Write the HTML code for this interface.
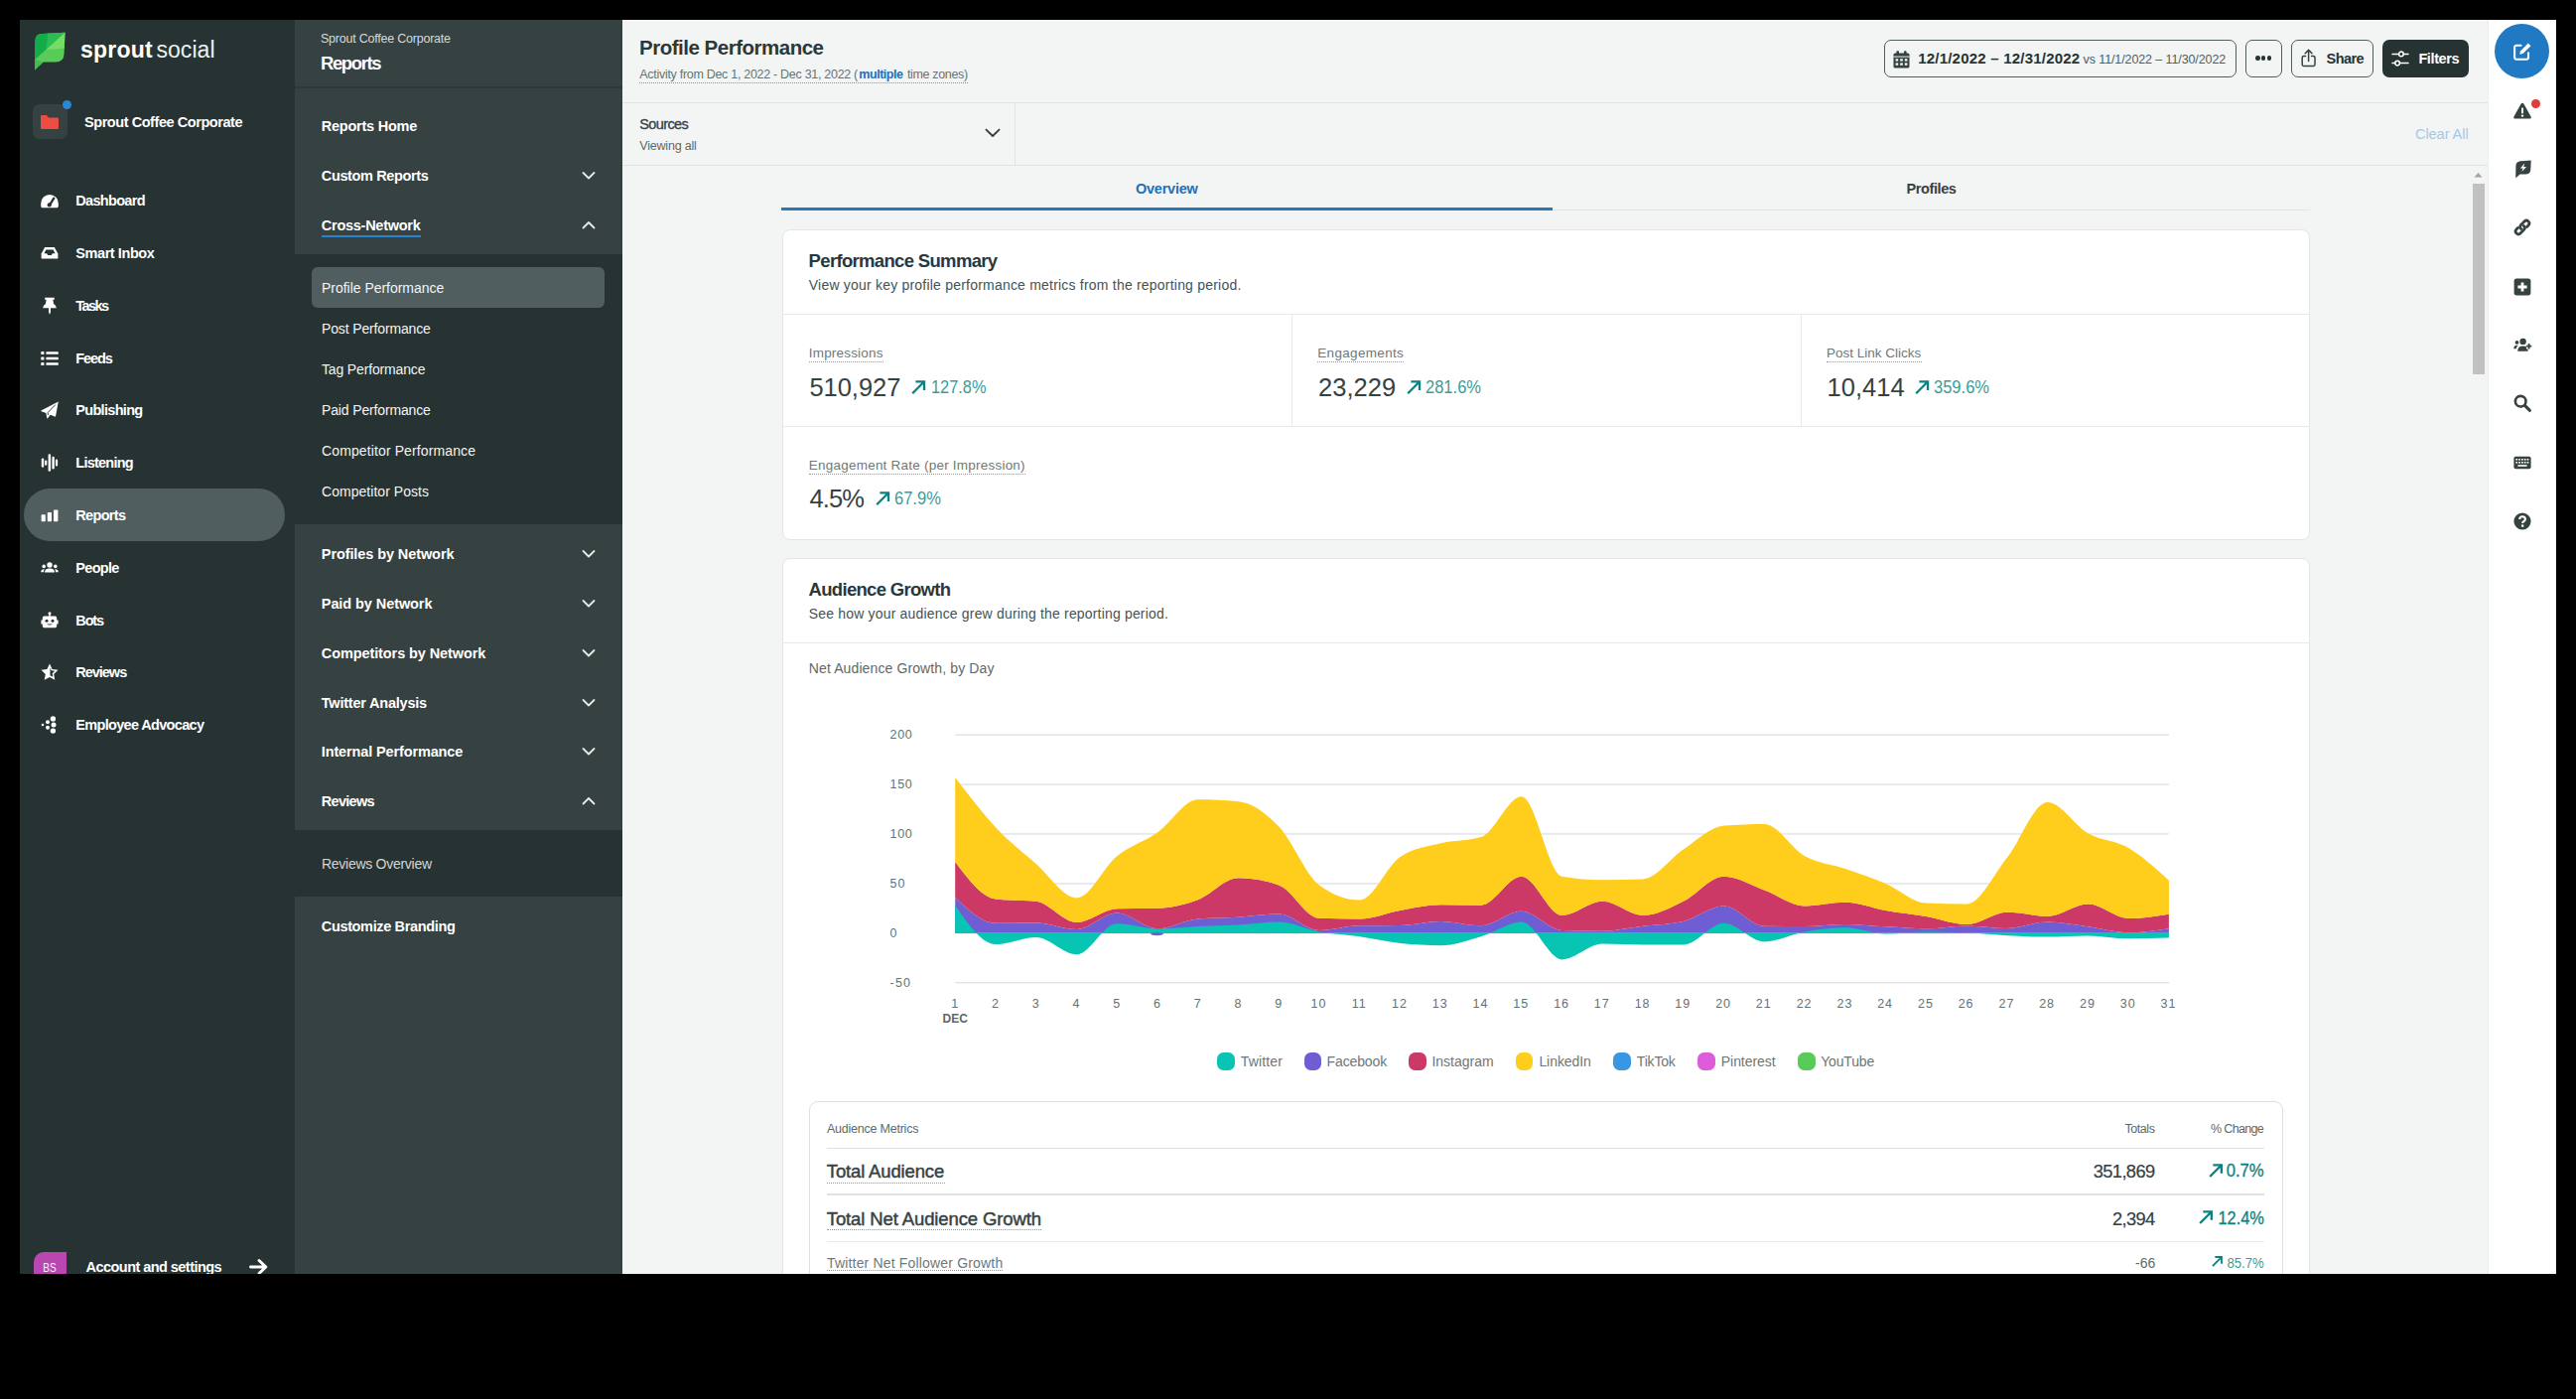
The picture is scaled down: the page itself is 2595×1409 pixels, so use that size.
<!DOCTYPE html>
<html><head><meta charset="utf-8"><title>Profile Performance</title>
<style>
html,body{margin:0;padding:0;background:#000;}
body{width:2595px;height:1409px;overflow:hidden;position:relative;font-family:"Liberation Sans",sans-serif;}
#app{position:absolute;left:20px;top:20px;width:2555px;height:1263px;overflow:hidden;background:#f3f4f4;}
#w{position:absolute;left:-20px;top:-20px;width:2595px;height:1409px;}
.t{position:absolute;white-space:nowrap;}
.r{position:absolute;box-sizing:border-box;}
.u{border-bottom:1px dotted #8b9596;}
</style></head><body><div id="app"><div id="w">
<div class="r" style="left:20px;top:20px;width:277px;height:1263px;background:#273333;"></div>
<svg class="r" style="left:34px;top:32px;" width="32" height="39" viewBox="0 0 32 39">
<path d="M1.5 9 Q1.5 2 8.5 2 L31.5 0.8 L30.6 22 Q30.4 30.6 22 30.6 L9.6 30.6 L1 38.6 Z" fill="#59cb59"/>
<path d="M1.5 9 Q1.5 2 8.5 2 L31.5 0.8 L1.3 28 Z" fill="#12ac4b"/>
<path d="M14 1.7 L31.5 0.8 L12.5 18 Z" fill="#2cbc4f"/>
<path d="M31.5 0.8 L30.8 16.5 L12.5 18 Z" fill="#75dd66"/>
<path d="M1 38.6 L1.3 28 L9.6 30.6 Z" fill="#3fbe4f"/>
</svg>
<div class="t" style="top:36.4px;font-size:23px;line-height:28px;color:#fff;font-weight:700;letter-spacing:0.210px;left:81.0px;">sprout</div>
<div class="t" style="top:36.4px;font-size:23px;line-height:28px;color:#eef0f0;letter-spacing:0.079px;left:157.4px;">social</div>
<div class="r" style="left:33px;top:105px;width:35px;height:35px;background:#364141;border-radius:7px;"></div>
<svg class="r" style="left:40px;top:115px;" width="20" height="16" viewBox="0 0 20 16"><path d="M1 2.2 Q1 1 2.2 1 L7 1 L9 3.4 L17.8 3.4 Q19 3.4 19 4.6 L19 13.8 Q19 15 17.8 15 L2.2 15 Q1 15 1 13.8 Z" fill="#ed4c42"/></svg>
<div class="r" style="left:62.7px;top:100.5px;width:9.6px;height:9.6px;background:#2b87d3;border-radius:50%;"></div>
<div class="t" style="top:112.7px;font-size:14.5px;line-height:20px;color:#fff;font-weight:700;letter-spacing:-0.440px;left:85.0px;">Sprout Coffee Corporate</div>
<div class="r" style="left:24px;top:492px;width:263px;height:53px;background:#515e5f;border-radius:27px;"></div>
<div class="t" style="top:191.8px;font-size:14.5px;line-height:20px;color:#fff;font-weight:700;letter-spacing:-0.692px;left:76.3px;">Dashboard</div>
<div class="t" style="top:244.8px;font-size:14.5px;line-height:20px;color:#fff;font-weight:700;letter-spacing:-0.429px;left:76.3px;">Smart Inbox</div>
<div class="t" style="top:297.6px;font-size:14.5px;line-height:20px;color:#fff;font-weight:700;letter-spacing:-1.560px;left:76.3px;">Tasks</div>
<div class="t" style="top:351.2px;font-size:14.5px;line-height:20px;color:#fff;font-weight:700;letter-spacing:-1.127px;left:76.3px;">Feeds</div>
<div class="t" style="top:403.2px;font-size:14.5px;line-height:20px;color:#fff;font-weight:700;letter-spacing:-0.690px;left:76.3px;">Publishing</div>
<div class="t" style="top:456.2px;font-size:14.5px;line-height:20px;color:#fff;font-weight:700;letter-spacing:-0.768px;left:76.3px;">Listening</div>
<div class="t" style="top:509.0px;font-size:14.5px;line-height:20px;color:#fff;font-weight:700;letter-spacing:-0.681px;left:76.3px;">Reports</div>
<div class="t" style="top:562.0px;font-size:14.5px;line-height:20px;color:#fff;font-weight:700;letter-spacing:-0.689px;left:76.3px;">People</div>
<div class="t" style="top:614.8px;font-size:14.5px;line-height:20px;color:#fff;font-weight:700;letter-spacing:-1.141px;left:76.3px;">Bots</div>
<div class="t" style="top:667.4px;font-size:14.5px;line-height:20px;color:#fff;font-weight:700;letter-spacing:-1.023px;left:76.3px;">Reviews</div>
<div class="t" style="top:720.2px;font-size:14.5px;line-height:20px;color:#fff;font-weight:700;letter-spacing:-0.675px;left:76.3px;">Employee Advocacy</div>
<svg class="r" style="left:41px;top:193.70000000000002px;" width="18" height="18" viewBox="0 0 18 18"><path d="M9 1.9 A8.8 8.8 0 0 0 0.2 10.7 V13.8 Q0.2 15.2 1.6 15.2 H16.4 Q17.8 15.2 17.8 13.8 V10.7 A8.8 8.8 0 0 0 9 1.9 Z" fill="#fff"/><path d="M13.3 5.6 L9.4 11.8" stroke="#273333" stroke-width="2.3" stroke-linecap="round"/><circle cx="8.7" cy="12.4" r="2.1" fill="#273333"/></svg>
<svg class="r" style="left:41px;top:245.8px;" width="18" height="18" viewBox="0 0 18 18"><path d="M4.2 3 H13.8 L17.4 9.6 V13.4 Q17.4 14.6 16.2 14.6 H1.8 Q0.6 14.6 0.6 13.4 V9.6 Z" fill="#fff"/><path d="M5.4 5.4 H12.6 L14.6 9.3 H11.8 L10.9 11.1 H7.1 L6.2 9.3 H3.4 Z" fill="#273333"/></svg>
<svg class="r" style="left:41px;top:298.6px;" width="18" height="18" viewBox="0 0 18 18"><path d="M4.2 0.8 H13.8 V2.8 H12.4 L13 7 Q15.6 8.5 15.8 11.2 H10 V15.2 L9 17.8 L8 15.2 V11.2 H2.2 Q2.4 8.5 5 7 L5.6 2.8 H4.2 Z" fill="#fff"/></svg>
<svg class="r" style="left:41px;top:352.2px;" width="18" height="18" viewBox="0 0 18 18"><rect x="0.3" y="2" width="3.1" height="3.1" rx="0.7" fill="#fff"/><rect x="0.3" y="7.5" width="3.1" height="3.1" rx="0.7" fill="#fff"/><rect x="0.3" y="13" width="3.1" height="3.1" rx="0.7" fill="#fff"/><rect x="5.4" y="2.3" width="12.4" height="2.5" rx="0.6" fill="#fff"/><rect x="5.4" y="7.8" width="12.4" height="2.5" rx="0.6" fill="#fff"/><rect x="5.4" y="13.3" width="12.4" height="2.5" rx="0.6" fill="#fff"/></svg>
<svg class="r" style="left:41px;top:404.2px;" width="18" height="18" viewBox="0 0 18 18"><path d="M17.8 0.4 L0.4 9.4 Q-0.2 9.9 0.6 10.3 L5.4 12 L6.2 17 Q6.5 17.8 7.1 17.2 L9.6 13.7 L14.2 15.6 Q14.9 15.8 15.1 15.1 Z" fill="#fff"/><path d="M14.8 3.6 L7.2 11.5 L7.4 14" stroke="#273333" stroke-width="0.9" fill="none"/></svg>
<svg class="r" style="left:41px;top:457.2px;" width="18" height="18" viewBox="0 0 18 18"><rect x="0.8" y="4.4" width="2.4" height="9.4" rx="1.2" fill="#fff"/><rect x="4.1" y="6.4" width="2.2" height="5.4" rx="1.1" fill="#fff"/><rect x="7.6" y="0.2" width="2.5" height="17.6" rx="1.2" fill="#fff"/><rect x="11.4" y="2.8" width="2.4" height="12.6" rx="1.2" fill="#fff"/><rect x="14.9" y="5.6" width="2.2" height="7" rx="1.1" fill="#fff"/></svg>
<svg class="r" style="left:41px;top:510.0px;" width="18" height="18" viewBox="0 0 18 18"><rect x="0.6" y="8.2" width="4.2" height="7" rx="0.9" fill="#fff"/><rect x="6.8" y="5.9" width="4.2" height="9.3" rx="0.9" fill="#fff"/><rect x="13" y="3.4" width="4.4" height="11.8" rx="0.9" fill="#fff"/></svg>
<svg class="r" style="left:41px;top:563.0px;" width="18" height="18" viewBox="0 0 18 18"><circle cx="9" cy="6" r="2.7" fill="#fff"/><path d="M4 13.6 Q4 9.6 9 9.6 Q14 9.6 14 13.6 Z" fill="#fff"/><circle cx="3.2" cy="7.4" r="1.8" fill="#fff"/><circle cx="14.8" cy="7.4" r="1.8" fill="#fff"/><path d="M0.2 13.2 Q0.2 10.2 3.4 10.2 L3.8 10.3 Q3 11.4 3 13.2 Z" fill="#fff"/><path d="M17.8 13.2 Q17.8 10.2 14.6 10.2 L14.2 10.3 Q15 11.4 15 13.2 Z" fill="#fff"/></svg>
<svg class="r" style="left:41px;top:615.8px;" width="18" height="18" viewBox="0 0 18 18"><circle cx="9" cy="1.8" r="1.5" fill="#fff"/><rect x="8.3" y="2" width="1.4" height="3" fill="#fff"/><path d="M3.6 4.6 H14.4 Q16.2 4.6 16.2 6.4 V8.6 H17.6 V12.4 H16.2 V14.4 Q16.2 16.2 14.4 16.2 H3.6 Q1.8 16.2 1.8 14.4 V12.4 H0.4 V8.6 H1.8 V6.4 Q1.8 4.6 3.6 4.6 Z" fill="#fff"/><circle cx="6" cy="9.2" r="1.5" fill="#273333"/><circle cx="12" cy="9.2" r="1.5" fill="#273333"/><path d="M6 12.4 Q9 14.6 12 12.4 Z" fill="#273333"/></svg>
<svg class="r" style="left:41px;top:668.4px;" width="18" height="18" viewBox="0 0 18 18"><path d="M9 0.6 L11.6 6 L17.5 6.8 L13.2 10.9 L14.3 16.8 L9 14 L3.7 16.8 L4.8 10.9 L0.5 6.8 L6.4 6 Z" fill="#fff"/><path d="M9.5 4.2 L10.7 7.3 L14.3 7.8 L11.7 10.2 L12.3 13.8 L9.5 12.2 Z" fill="#273333"/></svg>
<svg class="r" style="left:41px;top:721.2px;" width="18" height="18" viewBox="0 0 18 18"><circle cx="12.4" cy="2.9" r="2.7" fill="#fff"/><circle cx="13" cy="9" r="2.5" fill="#fff"/><circle cx="12.4" cy="15.1" r="2.7" fill="#fff"/><circle cx="7" cy="6.2" r="2" fill="#fff"/><circle cx="7" cy="11.8" r="2" fill="#fff"/><circle cx="2" cy="9" r="1.3" fill="#fff"/></svg>
<div class="r" style="left:34.2px;top:1261px;width:33px;height:34px;background:#b946b1;border-radius:10px 0 0 0;"></div>
<div class="t" style="top:1266.6px;font-size:12px;line-height:20px;color:#fbeffa;left:-449.6px;width:1000px;text-align:center;transform:scaleX(0.8370);transform-origin:center center;">BS</div>
<div class="t" style="top:1266.0px;font-size:14.5px;line-height:20px;color:#fff;font-weight:700;letter-spacing:-0.549px;left:86.6px;">Account and settings</div>
<svg class="r" style="left:251px;top:1267px;" width="20" height="18" viewBox="0 0 20 18"><path d="M1.5 9 H16.5 M10 2.5 L16.8 9 L10 15.5" stroke="#fff" stroke-width="2.9" fill="none" stroke-linecap="round" stroke-linejoin="round"/></svg>
<div class="r" style="left:297px;top:20px;width:330px;height:1263px;background:#364141;"></div>
<div class="r" style="left:297px;top:87px;width:330px;height:2px;background:#2d3939;"></div>
<div class="t" style="top:28.5px;font-size:12.5px;line-height:20px;color:#d5dadb;letter-spacing:-0.226px;left:323.0px;">Sprout Coffee Corporate</div>
<div class="t" style="top:53.6px;font-size:18.5px;line-height:20px;color:#fff;font-weight:700;letter-spacing:-1.400px;left:323.0px;">Reports</div>
<div class="t" style="top:117.2px;font-size:14.5px;line-height:20px;color:#fff;font-weight:700;letter-spacing:-0.237px;left:323.8px;">Reports Home</div>
<div class="t" style="top:167.2px;font-size:14.5px;line-height:20px;color:#fff;font-weight:700;letter-spacing:-0.368px;left:323.8px;">Custom Reports</div>
<svg class="r" style="left:586px;top:172.2px;" width="14" height="10" viewBox="0 0 14 10"><path d="M1.5 2 L7 7.5 L12.5 2" stroke="#e8eaea" stroke-width="1.8" fill="none" stroke-linecap="round" stroke-linejoin="round"/></svg>
<div class="t" style="top:217.2px;font-size:14.5px;line-height:20px;color:#fff;font-weight:700;letter-spacing:-0.262px;left:323.8px;">Cross-Network</div>
<svg class="r" style="left:586px;top:222.2px;" width="14" height="10" viewBox="0 0 14 10"><path d="M1.5 7.5 L7 2 L12.5 7.5" stroke="#e8eaea" stroke-width="1.8" fill="none" stroke-linecap="round" stroke-linejoin="round"/></svg>
<div class="t" style="top:548.4px;font-size:14.5px;line-height:20px;color:#fff;font-weight:700;letter-spacing:-0.093px;left:323.8px;">Profiles by Network</div>
<svg class="r" style="left:586px;top:553.4px;" width="14" height="10" viewBox="0 0 14 10"><path d="M1.5 2 L7 7.5 L12.5 2" stroke="#e8eaea" stroke-width="1.8" fill="none" stroke-linecap="round" stroke-linejoin="round"/></svg>
<div class="t" style="top:598.1px;font-size:14.5px;line-height:20px;color:#fff;font-weight:700;letter-spacing:-0.079px;left:323.8px;">Paid by Network</div>
<svg class="r" style="left:586px;top:603.1px;" width="14" height="10" viewBox="0 0 14 10"><path d="M1.5 2 L7 7.5 L12.5 2" stroke="#e8eaea" stroke-width="1.8" fill="none" stroke-linecap="round" stroke-linejoin="round"/></svg>
<div class="t" style="top:647.8px;font-size:14.5px;line-height:20px;color:#fff;font-weight:700;letter-spacing:-0.099px;left:323.8px;">Competitors by Network</div>
<svg class="r" style="left:586px;top:652.8px;" width="14" height="10" viewBox="0 0 14 10"><path d="M1.5 2 L7 7.5 L12.5 2" stroke="#e8eaea" stroke-width="1.8" fill="none" stroke-linecap="round" stroke-linejoin="round"/></svg>
<div class="t" style="top:697.5px;font-size:14.5px;line-height:20px;color:#fff;font-weight:700;letter-spacing:-0.219px;left:323.8px;">Twitter Analysis</div>
<svg class="r" style="left:586px;top:702.5px;" width="14" height="10" viewBox="0 0 14 10"><path d="M1.5 2 L7 7.5 L12.5 2" stroke="#e8eaea" stroke-width="1.8" fill="none" stroke-linecap="round" stroke-linejoin="round"/></svg>
<div class="t" style="top:747.2px;font-size:14.5px;line-height:20px;color:#fff;font-weight:700;letter-spacing:-0.134px;left:323.8px;">Internal Performance</div>
<svg class="r" style="left:586px;top:752.2px;" width="14" height="10" viewBox="0 0 14 10"><path d="M1.5 2 L7 7.5 L12.5 2" stroke="#e8eaea" stroke-width="1.8" fill="none" stroke-linecap="round" stroke-linejoin="round"/></svg>
<div class="t" style="top:796.9px;font-size:14.5px;line-height:20px;color:#fff;font-weight:700;letter-spacing:-0.706px;left:323.8px;">Reviews</div>
<svg class="r" style="left:586px;top:801.9px;" width="14" height="10" viewBox="0 0 14 10"><path d="M1.5 7.5 L7 2 L12.5 7.5" stroke="#e8eaea" stroke-width="1.8" fill="none" stroke-linecap="round" stroke-linejoin="round"/></svg>
<div class="t" style="top:923.3px;font-size:14.5px;line-height:20px;color:#fff;font-weight:700;letter-spacing:-0.352px;left:323.8px;">Customize Branding</div>
<div class="r" style="left:324px;top:237px;width:100px;height:2px;background:#2b83cc;"></div>
<div class="r" style="left:297px;top:256px;width:330px;height:272px;background:#273333;"></div>
<div class="r" style="left:314px;top:269px;width:295px;height:41px;background:#515e5f;border-radius:6px;"></div>
<div class="t" style="top:280.4px;font-size:14px;line-height:20px;color:#f3f4f4;letter-spacing:-0.023px;left:324.0px;">Profile Performance</div>
<div class="t" style="top:321.4px;font-size:14px;line-height:20px;color:#f3f4f4;letter-spacing:-0.143px;left:324.0px;">Post Performance</div>
<div class="t" style="top:362.4px;font-size:14px;line-height:20px;color:#f3f4f4;letter-spacing:-0.151px;left:324.0px;">Tag Performance</div>
<div class="t" style="top:403.4px;font-size:14px;line-height:20px;color:#f3f4f4;letter-spacing:-0.144px;left:324.0px;">Paid Performance</div>
<div class="t" style="top:444.4px;font-size:14px;line-height:20px;color:#f3f4f4;letter-spacing:0.119px;left:324.0px;">Competitor Performance</div>
<div class="t" style="top:485.4px;font-size:14px;line-height:20px;color:#f3f4f4;letter-spacing:0.042px;left:324.0px;">Competitor Posts</div>
<div class="r" style="left:297px;top:836px;width:330px;height:67px;background:#273333;"></div>
<div class="t" style="top:860.2px;font-size:14px;line-height:20px;color:#d0d5d6;letter-spacing:-0.276px;left:324.0px;">Reviews Overview</div>
<div class="r" style="left:627px;top:103px;width:1879px;height:1px;background:#e1e4e4;"></div>
<div class="t" style="top:38.2px;font-size:20.5px;line-height:20px;color:#2c3838;font-weight:700;letter-spacing:-0.490px;left:644.0px;">Profile Performance</div>
<div class="t" style="top:64.5px;font-size:12.5px;line-height:20px;color:#687374;letter-spacing:-0.294px;left:644.3px;">Activity from Dec 1, 2022 - Dec 31, 2022 (</div>
<div class="t" style="top:64.5px;font-size:12.5px;line-height:20px;color:#2470b7;font-weight:700;letter-spacing:-0.460px;left:865.3px;">multiple</div>
<div class="t" style="top:64.5px;font-size:12.5px;line-height:20px;color:#687374;letter-spacing:-0.331px;left:913.9px;">time zones)</div>
<div class="r" style="left:644px;top:82.6px;width:331px;height:1px;border-bottom:1px dotted #8b9596;"></div>
<div class="r" style="left:1898px;top:40px;width:355px;height:38px;border:1px solid #515e5f;border-radius:7px;"></div>
<svg class="r" style="left:1907px;top:50.5px;" width="17" height="18" viewBox="0 0 17 18">
<rect x="0.5" y="2.6" width="16" height="15" rx="1.6" fill="#364141"/>
<rect x="3.4" y="0.3" width="2.6" height="4.4" rx="0.8" fill="#364141"/><rect x="11" y="0.3" width="2.6" height="4.4" rx="0.8" fill="#364141"/>
<rect x="0.5" y="5.6" width="16" height="1" fill="#f3f4f4"/>
<g fill="#f3f4f4"><rect x="2.6" y="8.2" width="2.6" height="2.4"/><rect x="7.2" y="8.2" width="2.6" height="2.4"/><rect x="11.8" y="8.2" width="2.6" height="2.4"/>
<rect x="2.6" y="12.4" width="2.6" height="2.4"/><rect x="7.2" y="12.4" width="2.6" height="2.4"/><rect x="11.8" y="12.4" width="2.6" height="2.4"/></g></svg>
<div class="t" style="top:48.8px;font-size:15px;line-height:20px;color:#273333;font-weight:700;letter-spacing:0.215px;left:1932.2px;">12/1/2022 – 12/31/2022</div>
<div class="t" style="top:49.6px;font-size:12.5px;line-height:20px;color:#515e5f;letter-spacing:-0.108px;left:2098.6px;">vs 11/1/2022 – 11/30/2022</div>
<div class="r" style="left:2262px;top:40px;width:37px;height:38px;border:1px solid #515e5f;border-radius:7px;"></div>
<div class="r" style="left:2272.3px;top:56.4px;width:4.6px;height:4.6px;background:#273333;border-radius:50%;"></div>
<div class="r" style="left:2277.9px;top:56.4px;width:4.6px;height:4.6px;background:#273333;border-radius:50%;"></div>
<div class="r" style="left:2283.5px;top:56.4px;width:4.6px;height:4.6px;background:#273333;border-radius:50%;"></div>
<div class="r" style="left:2308px;top:40px;width:83px;height:38px;border:1px solid #515e5f;border-radius:7px;"></div>
<svg class="r" style="left:2318px;top:49px;" width="16" height="19" viewBox="0 0 16 19"><path d="M4.6 7.6 H2.6 Q1.2 7.6 1.2 9 V16 Q1.2 17.4 2.6 17.4 H12.6 Q14 17.4 14 16 V9 Q14 7.6 12.6 7.6 H10.6" stroke="#364141" stroke-width="1.5" fill="none" stroke-linecap="round"/><path d="M7.6 12.4 V1.6 M4.2 4.8 L7.6 1.4 L11 4.8" stroke="#364141" stroke-width="1.5" fill="none" stroke-linecap="round" stroke-linejoin="round"/></svg>
<div class="t" style="top:48.8px;font-size:14.5px;line-height:20px;color:#273333;font-weight:700;letter-spacing:-0.575px;left:2343.6px;">Share</div>
<div class="r" style="left:2400px;top:40px;width:87px;height:38px;background:#273333;border-radius:7px;"></div>
<svg class="r" style="left:2409px;top:49px;" width="18" height="20" viewBox="0 0 18 20"><path d="M1 5.4 H7.4 M12.4 5.4 H17 M1 14.6 H3.6 M8.6 14.6 H17" stroke="#fff" stroke-width="1.5" stroke-linecap="round"/><circle cx="9.9" cy="5.4" r="2.3" stroke="#fff" stroke-width="1.5" fill="none"/><circle cx="6.1" cy="14.6" r="2.3" stroke="#fff" stroke-width="1.5" fill="none"/></svg>
<div class="t" style="top:48.8px;font-size:14.5px;line-height:20px;color:#fff;font-weight:700;letter-spacing:-0.386px;left:2436.4px;">Filters</div>
<div class="r" style="left:627px;top:166px;width:1879px;height:1px;background:#e1e4e4;"></div>
<div class="r" style="left:1022px;top:104px;width:1px;height:62px;background:#e1e4e4;"></div>
<div class="t" style="top:115.0px;font-size:14.5px;line-height:20px;color:#364141;letter-spacing:-0.616px;left:644.3px;-webkit-text-stroke:0.3px #364141;">Sources</div>
<div class="t" style="top:137.0px;font-size:12.5px;line-height:20px;color:#5e696a;letter-spacing:-0.203px;left:644.3px;">Viewing all</div>
<svg class="r" style="left:991.5px;top:128.5px;" width="16" height="10" viewBox="0 0 16 10"><path d="M1.5 1.6 L8 8 L14.5 1.6" stroke="#364141" stroke-width="1.9" fill="none" stroke-linecap="round" stroke-linejoin="round"/></svg>
<div class="t" style="top:125.4px;font-size:14.5px;line-height:20px;color:#a3c9e6;letter-spacing:-0.049px;left:2433.0px;">Clear All</div>
<div class="r" style="left:787px;top:211px;width:1540px;height:1px;background:#e1e4e4;"></div>
<div class="r" style="left:787px;top:208.8px;width:777px;height:3.3px;background:#2c76b9;"></div>
<div class="t" style="top:180.0px;font-size:14.5px;line-height:20px;color:#2470b7;font-weight:700;letter-spacing:-0.212px;left:675.3px;width:1000px;text-align:center;">Overview</div>
<div class="t" style="top:180.0px;font-size:14.5px;line-height:20px;color:#364141;font-weight:700;letter-spacing:-0.384px;left:1445.5px;width:1000px;text-align:center;">Profiles</div>
<div class="r" style="left:2490.5px;top:184.5px;width:12.5px;height:192.5px;background:#c1c1c1;"></div>
<svg class="r" style="left:2492px;top:173px;" width="9" height="6" viewBox="0 0 9 6"><path d="M0.5 5.5 L4.5 1 L8.5 5.5 Z" fill="#a3a3a3"/></svg>
<div class="r" style="left:787.5px;top:230.5px;width:1539px;height:313px;background:#fff;border:1px solid #e3e6e6;border-radius:8px;"></div>
<div class="t" style="top:252.6px;font-size:18.5px;line-height:20px;color:#2c3838;font-weight:700;letter-spacing:-0.670px;left:814.6px;">Performance Summary</div>
<div class="t" style="top:277.3px;font-size:14px;line-height:20px;color:#465253;letter-spacing:0.209px;left:814.8px;">View your key profile performance metrics from the reporting period.</div>
<div class="r" style="left:788px;top:316px;width:1538px;height:1px;background:#e8eaea;"></div>
<div class="r" style="left:788px;top:429px;width:1538px;height:1px;background:#e8eaea;"></div>
<div class="r" style="left:1301px;top:316px;width:1px;height:113px;background:#e8eaea;"></div>
<div class="r" style="left:1814px;top:316px;width:1px;height:113px;background:#e8eaea;"></div>
<div class="t" style="top:346.1px;font-size:13.5px;line-height:20px;color:#6e797a;letter-spacing:0.182px;left:814.8px;">Impressions</div>
<div class="r" style="left:814.8px;top:364.1px;width:75.1px;height:1px;border-bottom:1px dotted #929a9b;"></div>
<div class="t" style="top:374.9px;font-size:25.5px;line-height:30px;color:#364141;letter-spacing:-0.030px;left:815.4px;">510,927</div>
<svg class="r" style="left:918.4px;top:382.7px;" width="14.4" height="14.4" viewBox="0 0 14.4 14.4"><path d="M1.2 13.2 L12.4 2 M4.4 1.35 H13.05 V10" stroke="#0c8280" stroke-width="2.3" fill="none" stroke-linecap="butt" stroke-linejoin="miter"/></svg>
<div class="t" style="top:377.7px;font-size:17.5px;line-height:24px;color:#3a9d9a;left:938.0px;transform:scaleX(0.9334);transform-origin:left center;">127.8%</div>
<div class="t" style="top:346.1px;font-size:13.5px;line-height:20px;color:#6e797a;letter-spacing:0.319px;left:1327.3px;">Engagements</div>
<div class="r" style="left:1327.3px;top:364.1px;width:87.0px;height:1px;border-bottom:1px dotted #929a9b;"></div>
<div class="t" style="top:374.9px;font-size:25.5px;line-height:30px;color:#364141;letter-spacing:0.081px;left:1327.9px;">23,229</div>
<svg class="r" style="left:1417.4px;top:382.7px;" width="14.4" height="14.4" viewBox="0 0 14.4 14.4"><path d="M1.2 13.2 L12.4 2 M4.4 1.35 H13.05 V10" stroke="#0c8280" stroke-width="2.3" fill="none" stroke-linecap="butt" stroke-linejoin="miter"/></svg>
<div class="t" style="top:377.7px;font-size:17.5px;line-height:24px;color:#3a9d9a;left:1435.6px;transform:scaleX(0.9435);transform-origin:left center;">281.6%</div>
<div class="t" style="top:346.1px;font-size:13.5px;line-height:20px;color:#6e797a;letter-spacing:-0.005px;left:1840.0px;">Post Link Clicks</div>
<div class="r" style="left:1840px;top:364.1px;width:95.7px;height:1px;border-bottom:1px dotted #929a9b;"></div>
<div class="t" style="top:374.9px;font-size:25.5px;line-height:30px;color:#364141;left:1840.6px;">10,414</div>
<svg class="r" style="left:1929.4px;top:382.7px;" width="14.4" height="14.4" viewBox="0 0 14.4 14.4"><path d="M1.2 13.2 L12.4 2 M4.4 1.35 H13.05 V10" stroke="#0c8280" stroke-width="2.3" fill="none" stroke-linecap="butt" stroke-linejoin="miter"/></svg>
<div class="t" style="top:377.7px;font-size:17.5px;line-height:24px;color:#3a9d9a;left:1948.2px;transform:scaleX(0.9435);transform-origin:left center;">359.6%</div>
<div class="t" style="top:458.8px;font-size:13.5px;line-height:20px;color:#6e797a;letter-spacing:0.224px;left:814.8px;">Engagement Rate (per Impression)</div>
<div class="r" style="left:814.8px;top:476.8px;width:218.3px;height:1px;border-bottom:1px dotted #929a9b;"></div>
<div class="t" style="top:486.9px;font-size:25.5px;line-height:30px;color:#364141;letter-spacing:-0.841px;left:815.4px;">4.5%</div>
<svg class="r" style="left:882.2px;top:494.7px;" width="14.4" height="14.4" viewBox="0 0 14.4 14.4"><path d="M1.2 13.2 L12.4 2 M4.4 1.35 H13.05 V10" stroke="#0c8280" stroke-width="2.3" fill="none" stroke-linecap="butt" stroke-linejoin="miter"/></svg>
<div class="t" style="top:489.7px;font-size:17.5px;line-height:24px;color:#3a9d9a;left:901.2px;transform:scaleX(0.9432);transform-origin:left center;">67.9%</div>
<div class="r" style="left:787.5px;top:561.5px;width:1539px;height:760px;background:#fff;border:1px solid #e3e6e6;border-radius:8px;"></div>
<div class="t" style="top:584.2px;font-size:18.5px;line-height:20px;color:#2c3838;font-weight:700;letter-spacing:-0.697px;left:814.6px;">Audience Growth</div>
<div class="t" style="top:608.2px;font-size:14px;line-height:20px;color:#465253;letter-spacing:0.175px;left:814.8px;">See how your audience grew during the reporting period.</div>
<div class="r" style="left:788px;top:647px;width:1538px;height:1px;background:#e8eaea;"></div>
<div class="t" style="top:663.0px;font-size:14px;line-height:20px;color:#5e696a;letter-spacing:0.113px;left:814.8px;">Net Audience Growth, by Day</div>
<svg class="r" style="left:0;top:0" width="2595" height="1409" viewBox="0 0 2595 1409"><rect x="962.2" y="739.5" width="1222.7" height="1.3" fill="#dde0e3"/><rect x="962.2" y="789.4" width="1222.7" height="1.3" fill="#dde0e3"/><rect x="962.2" y="839.3" width="1222.7" height="1.3" fill="#dde0e3"/><rect x="962.2" y="889.3" width="1222.7" height="1.3" fill="#dde0e3"/><rect x="962.2" y="939.2" width="1222.7" height="1.3" fill="#dde0e3"/><rect x="962.2" y="989.1" width="1222.7" height="1.3" fill="#dde0e3"/><path d="M962.2,903.9C975.8,916.8 989.4,929.8 1003.0,929.8C1016.5,929.8 1030.1,929.5 1043.7,929.5C1057.3,929.5 1070.9,936.1 1084.5,936.1C1098.1,936.1 1111.6,919.6 1125.2,919.6C1138.8,919.6 1152.4,935.3 1166.0,935.3C1179.6,935.3 1193.2,926.5 1206.7,925.4C1220.3,924.4 1233.9,924.7 1247.5,923.8C1261.1,923.0 1274.7,920.4 1288.3,920.4C1301.8,920.4 1315.4,936.9 1329.0,936.9C1342.6,936.9 1356.2,932.4 1369.8,932.2C1383.4,932.0 1396.9,932.1 1410.5,931.9C1424.1,931.7 1437.7,927.9 1451.3,927.9C1464.9,927.9 1478.5,932.2 1492.0,932.2C1505.6,932.2 1519.2,917.7 1532.8,917.7C1546.4,917.7 1560.0,936.4 1573.6,936.9C1587.1,937.4 1600.7,937.7 1614.3,937.7C1627.9,937.7 1641.5,934.3 1655.1,932.7C1668.7,931.1 1682.2,931.1 1695.8,927.9C1709.4,924.7 1723.0,912.5 1736.6,912.5C1750.2,912.5 1763.8,932.5 1777.3,932.7C1790.9,932.9 1804.5,933.0 1818.1,933.0C1831.7,933.0 1845.3,930.9 1858.9,930.9C1872.4,930.9 1886.0,932.6 1899.6,933.3C1913.2,934.0 1926.8,935.3 1940.4,935.3C1954.0,935.3 1967.5,932.4 1981.1,932.4C1994.7,932.4 2008.3,935.0 2021.9,935.0C2035.5,935.0 2049.1,928.5 2062.6,928.5C2076.2,928.5 2089.8,931.5 2103.4,933.3C2117.0,935.1 2130.6,939.3 2144.2,939.3C2157.7,939.3 2171.3,937.3 2184.9,935.3L2184.9,939.8C2171.3,939.8 2157.7,939.8 2144.2,939.8C2130.6,939.8 2117.0,939.8 2103.4,939.8C2089.8,939.8 2076.2,939.8 2062.6,939.8C2049.1,939.8 2035.5,939.8 2021.9,939.8C2008.3,939.8 1994.7,939.8 1981.1,939.8C1967.5,939.8 1954.0,939.8 1940.4,939.8C1926.8,939.8 1913.2,939.8 1899.6,939.8C1886.0,939.8 1872.4,939.8 1858.9,939.8C1845.3,939.8 1831.7,939.8 1818.1,939.8C1804.5,939.8 1790.9,939.8 1777.3,939.8C1763.8,939.8 1750.2,939.8 1736.6,939.8C1723.0,939.8 1709.4,939.8 1695.8,939.8C1682.2,939.8 1668.7,939.8 1655.1,939.8C1641.5,939.8 1627.9,939.8 1614.3,939.8C1600.7,939.8 1587.1,939.8 1573.6,939.8C1560.0,939.8 1546.4,939.8 1532.8,939.8C1519.2,939.8 1505.6,939.8 1492.0,939.8C1478.5,939.8 1464.9,939.8 1451.3,939.8C1437.7,939.8 1424.1,939.8 1410.5,939.8C1396.9,939.8 1383.4,939.8 1369.8,939.8C1356.2,939.8 1342.6,939.8 1329.0,939.8C1315.4,939.8 1301.8,939.8 1288.3,939.8C1274.7,939.8 1261.1,939.8 1247.5,939.8C1233.9,939.8 1220.3,939.8 1206.7,939.8C1193.2,939.8 1179.6,939.8 1166.0,939.8C1152.4,939.8 1138.8,939.8 1125.2,939.8C1111.6,939.8 1098.1,939.8 1084.5,939.8C1070.9,939.8 1057.3,939.8 1043.7,939.8C1030.1,939.8 1016.5,939.8 1003.0,939.8C989.4,939.8 975.8,939.8 962.2,939.8Z" fill="#6f5ed3"/><path d="M962.2,911.8C975.8,931.5 989.4,951.1 1003.0,951.1C1016.5,951.1 1030.1,944.0 1043.7,944.0C1057.3,944.0 1070.9,961.3 1084.5,961.3C1098.1,961.3 1111.6,930.3 1125.2,930.3C1138.8,930.3 1152.4,935.3 1166.0,935.3C1179.6,935.3 1193.2,933.7 1206.7,933.0C1220.3,932.4 1233.9,932.1 1247.5,931.4C1261.1,930.7 1274.7,928.6 1288.3,928.6C1301.8,928.6 1315.4,936.1 1329.0,938.5C1342.6,940.9 1356.2,941.3 1369.8,943.2C1383.4,945.1 1396.9,948.5 1410.5,950.0C1424.1,951.4 1437.7,952.2 1451.3,952.2C1464.9,952.2 1478.5,947.1 1492.0,943.2C1505.6,939.3 1519.2,928.6 1532.8,928.6C1546.4,928.6 1560.0,966.4 1573.6,966.4C1587.1,966.4 1600.7,950.6 1614.3,950.6C1627.9,950.6 1641.5,951.6 1655.1,951.6C1668.7,951.6 1682.2,951.6 1695.8,951.6C1709.4,951.6 1723.0,929.8 1736.6,929.8C1750.2,929.8 1763.8,948.4 1777.3,948.4C1790.9,948.4 1804.5,940.8 1818.1,938.5C1831.7,936.2 1845.3,934.3 1858.9,934.3C1872.4,934.3 1886.0,940.5 1899.6,940.5C1913.2,940.5 1926.8,938.4 1940.4,938.4C1954.0,938.4 1967.5,938.7 1981.1,939.3C1994.7,939.9 2008.3,941.5 2021.9,942.2C2035.5,942.9 2049.1,943.6 2062.6,943.6C2076.2,943.6 2089.8,942.4 2103.4,942.4C2117.0,942.4 2130.6,945.3 2144.2,945.3C2157.7,945.3 2171.3,944.8 2184.9,944.4L2184.9,939.8C2171.3,939.8 2157.7,939.8 2144.2,939.8C2130.6,939.8 2117.0,939.8 2103.4,939.8C2089.8,939.8 2076.2,939.8 2062.6,939.8C2049.1,939.8 2035.5,939.8 2021.9,939.8C2008.3,939.8 1994.7,939.8 1981.1,939.8C1967.5,939.8 1954.0,939.8 1940.4,939.8C1926.8,939.8 1913.2,939.8 1899.6,939.8C1886.0,939.8 1872.4,939.8 1858.9,939.8C1845.3,939.8 1831.7,939.8 1818.1,939.8C1804.5,939.8 1790.9,939.8 1777.3,939.8C1763.8,939.8 1750.2,939.8 1736.6,939.8C1723.0,939.8 1709.4,939.8 1695.8,939.8C1682.2,939.8 1668.7,939.8 1655.1,939.8C1641.5,939.8 1627.9,939.8 1614.3,939.8C1600.7,939.8 1587.1,939.8 1573.6,939.8C1560.0,939.8 1546.4,939.8 1532.8,939.8C1519.2,939.8 1505.6,939.8 1492.0,939.8C1478.5,939.8 1464.9,939.8 1451.3,939.8C1437.7,939.8 1424.1,939.8 1410.5,939.8C1396.9,939.8 1383.4,939.8 1369.8,939.8C1356.2,939.8 1342.6,939.8 1329.0,939.8C1315.4,939.8 1301.8,939.8 1288.3,939.8C1274.7,939.8 1261.1,939.8 1247.5,939.8C1233.9,939.8 1220.3,939.8 1206.7,939.8C1193.2,939.8 1179.6,939.8 1166.0,939.8C1152.4,939.8 1138.8,939.8 1125.2,939.8C1111.6,939.8 1098.1,939.8 1084.5,939.8C1070.9,939.8 1057.3,939.8 1043.7,939.8C1030.1,939.8 1016.5,939.8 1003.0,939.8C989.4,939.8 975.8,939.8 962.2,939.8Z" fill="#08c4b2"/><ellipse cx="1165.5" cy="940.6" rx="6.5" ry="1.6" fill="#6f5ed3"/><path d="M962.2,867.9C975.8,885.9 989.4,903.9 1003.0,905.5C1016.5,907.0 1030.1,906.3 1043.7,907.8C1057.3,909.4 1070.9,929.0 1084.5,929.0C1098.1,929.0 1111.6,915.7 1125.2,915.3C1138.8,915.0 1152.4,915.2 1166.0,914.8C1179.6,914.5 1193.2,911.3 1206.7,906.3C1220.3,901.2 1233.9,884.3 1247.5,884.3C1261.1,884.3 1274.7,886.6 1288.3,891.4C1301.8,896.1 1315.4,924.4 1329.0,924.8C1342.6,925.2 1356.2,925.4 1369.8,925.4C1383.4,925.4 1396.9,919.3 1410.5,916.9C1424.1,914.6 1437.7,911.3 1451.3,911.3C1464.9,911.3 1478.5,911.7 1492.0,911.7C1505.6,911.7 1519.2,882.7 1532.8,882.7C1546.4,882.7 1560.0,922.0 1573.6,922.0C1587.1,922.0 1600.7,907.8 1614.3,907.8C1627.9,907.8 1641.5,922.0 1655.1,922.0C1668.7,922.0 1682.2,914.4 1695.8,907.8C1709.4,901.3 1723.0,882.7 1736.6,882.7C1750.2,882.7 1763.8,891.6 1777.3,896.6C1790.9,901.5 1804.5,912.5 1818.1,912.5C1831.7,912.5 1845.3,908.8 1858.9,908.8C1872.4,908.8 1886.0,914.7 1899.6,917.0C1913.2,919.4 1926.8,920.7 1940.4,923.0C1954.0,925.4 1967.5,931.0 1981.1,931.0C1994.7,931.0 2008.3,918.7 2021.9,918.7C2035.5,918.7 2049.1,923.0 2062.6,923.0C2076.2,923.0 2089.8,910.6 2103.4,910.6C2117.0,910.6 2130.6,925.0 2144.2,925.0C2157.7,925.0 2171.3,922.9 2184.9,920.7L2184.9,935.3C2171.3,937.3 2157.7,939.3 2144.2,939.3C2130.6,939.3 2117.0,935.1 2103.4,933.3C2089.8,931.5 2076.2,928.5 2062.6,928.5C2049.1,928.5 2035.5,935.0 2021.9,935.0C2008.3,935.0 1994.7,932.4 1981.1,932.4C1967.5,932.4 1954.0,935.3 1940.4,935.3C1926.8,935.3 1913.2,934.0 1899.6,933.3C1886.0,932.6 1872.4,930.9 1858.9,930.9C1845.3,930.9 1831.7,933.0 1818.1,933.0C1804.5,933.0 1790.9,932.9 1777.3,932.7C1763.8,932.5 1750.2,912.5 1736.6,912.5C1723.0,912.5 1709.4,924.7 1695.8,927.9C1682.2,931.1 1668.7,931.1 1655.1,932.7C1641.5,934.3 1627.9,937.7 1614.3,937.7C1600.7,937.7 1587.1,937.4 1573.6,936.9C1560.0,936.4 1546.4,917.7 1532.8,917.7C1519.2,917.7 1505.6,932.2 1492.0,932.2C1478.5,932.2 1464.9,927.9 1451.3,927.9C1437.7,927.9 1424.1,931.7 1410.5,931.9C1396.9,932.1 1383.4,932.0 1369.8,932.2C1356.2,932.4 1342.6,936.9 1329.0,936.9C1315.4,936.9 1301.8,920.4 1288.3,920.4C1274.7,920.4 1261.1,923.0 1247.5,923.8C1233.9,924.7 1220.3,924.4 1206.7,925.4C1193.2,926.5 1179.6,935.3 1166.0,935.3C1152.4,935.3 1138.8,919.6 1125.2,919.6C1111.6,919.6 1098.1,936.1 1084.5,936.1C1070.9,936.1 1057.3,929.5 1043.7,929.5C1030.1,929.5 1016.5,929.8 1003.0,929.8C989.4,929.8 975.8,916.8 962.2,903.9Z" fill="#cd3966"/><path d="M962.2,783.0C975.8,800.8 989.4,818.6 1003.0,833.2C1016.5,847.7 1030.1,858.2 1043.7,870.1C1057.3,882.0 1070.9,904.4 1084.5,904.4C1098.1,904.4 1111.6,873.2 1125.2,862.2C1138.8,851.2 1152.4,847.8 1166.0,838.4C1179.6,828.9 1193.2,805.3 1206.7,805.3C1220.3,805.3 1233.9,805.9 1247.5,807.2C1261.1,808.5 1274.7,818.3 1288.3,832.4C1301.8,846.4 1315.4,881.3 1329.0,891.4C1342.6,901.5 1356.2,906.5 1369.8,906.5C1383.4,906.5 1396.9,872.1 1410.5,863.0C1424.1,853.9 1437.7,852.7 1451.3,849.3C1464.9,846.0 1478.5,847.2 1492.0,843.0C1505.6,838.9 1519.2,802.2 1532.8,802.2C1546.4,802.2 1560.0,880.3 1573.6,882.7C1587.1,885.1 1600.7,886.3 1614.3,886.3C1627.9,886.3 1641.5,886.0 1655.1,885.5C1668.7,884.9 1682.2,864.6 1695.8,855.6C1709.4,846.6 1723.0,832.6 1736.6,831.6C1750.2,830.5 1763.8,830.0 1777.3,830.0C1790.9,830.0 1804.5,854.7 1818.1,862.2C1831.7,869.7 1845.3,870.3 1858.9,874.9C1872.4,879.5 1886.0,884.1 1899.6,889.9C1913.2,895.7 1926.8,909.0 1940.4,909.6C1954.0,910.3 1967.5,910.6 1981.1,910.6C1994.7,910.6 2008.3,880.9 2021.9,863.8C2035.5,846.7 2049.1,808.1 2062.6,808.1C2076.2,808.1 2089.8,831.6 2103.4,839.3C2117.0,846.9 2130.6,846.1 2144.2,854.0C2157.7,861.9 2171.3,874.3 2184.9,886.7L2184.9,920.7C2171.3,922.9 2157.7,925.0 2144.2,925.0C2130.6,925.0 2117.0,910.6 2103.4,910.6C2089.8,910.6 2076.2,923.0 2062.6,923.0C2049.1,923.0 2035.5,918.7 2021.9,918.7C2008.3,918.7 1994.7,931.0 1981.1,931.0C1967.5,931.0 1954.0,925.4 1940.4,923.0C1926.8,920.7 1913.2,919.4 1899.6,917.0C1886.0,914.7 1872.4,908.8 1858.9,908.8C1845.3,908.8 1831.7,912.5 1818.1,912.5C1804.5,912.5 1790.9,901.5 1777.3,896.6C1763.8,891.6 1750.2,882.7 1736.6,882.7C1723.0,882.7 1709.4,901.3 1695.8,907.8C1682.2,914.4 1668.7,922.0 1655.1,922.0C1641.5,922.0 1627.9,907.8 1614.3,907.8C1600.7,907.8 1587.1,922.0 1573.6,922.0C1560.0,922.0 1546.4,882.7 1532.8,882.7C1519.2,882.7 1505.6,911.7 1492.0,911.7C1478.5,911.7 1464.9,911.3 1451.3,911.3C1437.7,911.3 1424.1,914.6 1410.5,916.9C1396.9,919.3 1383.4,925.4 1369.8,925.4C1356.2,925.4 1342.6,925.2 1329.0,924.8C1315.4,924.4 1301.8,896.1 1288.3,891.4C1274.7,886.6 1261.1,884.3 1247.5,884.3C1233.9,884.3 1220.3,901.2 1206.7,906.3C1193.2,911.3 1179.6,914.5 1166.0,914.8C1152.4,915.2 1138.8,915.0 1125.2,915.3C1111.6,915.7 1098.1,929.0 1084.5,929.0C1070.9,929.0 1057.3,909.4 1043.7,907.8C1030.1,906.3 1016.5,907.0 1003.0,905.5C989.4,903.9 975.8,885.9 962.2,867.9Z" fill="#ffcd1c"/></svg>
<div class="t" style="top:730.4px;font-size:12.5px;line-height:20px;color:#667172;letter-spacing:0.672px;left:896.6px;">200</div>
<div class="t" style="top:780.3px;font-size:12.5px;line-height:20px;color:#667172;letter-spacing:0.672px;left:896.6px;">150</div>
<div class="t" style="top:830.2px;font-size:12.5px;line-height:20px;color:#667172;letter-spacing:0.672px;left:896.6px;">100</div>
<div class="t" style="top:880.2px;font-size:12.5px;line-height:20px;color:#667172;letter-spacing:0.996px;left:896.6px;">50</div>
<div class="t" style="top:930.1px;font-size:12.5px;line-height:20px;color:#667172;left:896.6px;">0</div>
<div class="t" style="top:980.0px;font-size:12.5px;line-height:20px;color:#667172;letter-spacing:1.166px;left:896.6px;">-50</div>
<div class="t" style="top:1000.6px;font-size:12.5px;line-height:20px;color:#667172;left:461.7px;width:1000px;text-align:center;">1</div>
<div class="t" style="top:1000.6px;font-size:12.5px;line-height:20px;color:#667172;left:502.5px;width:1000px;text-align:center;">2</div>
<div class="t" style="top:1000.6px;font-size:12.5px;line-height:20px;color:#667172;left:543.2px;width:1000px;text-align:center;">3</div>
<div class="t" style="top:1000.6px;font-size:12.5px;line-height:20px;color:#667172;left:584.0px;width:1000px;text-align:center;">4</div>
<div class="t" style="top:1000.6px;font-size:12.5px;line-height:20px;color:#667172;left:624.7px;width:1000px;text-align:center;">5</div>
<div class="t" style="top:1000.6px;font-size:12.5px;line-height:20px;color:#667172;left:665.5px;width:1000px;text-align:center;">6</div>
<div class="t" style="top:1000.6px;font-size:12.5px;line-height:20px;color:#667172;left:706.2px;width:1000px;text-align:center;">7</div>
<div class="t" style="top:1000.6px;font-size:12.5px;line-height:20px;color:#667172;left:747.0px;width:1000px;text-align:center;">8</div>
<div class="t" style="top:1000.6px;font-size:12.5px;line-height:20px;color:#667172;left:787.8px;width:1000px;text-align:center;">9</div>
<div class="t" style="top:1000.6px;font-size:12.5px;line-height:20px;color:#667172;letter-spacing:1.000px;left:828.5px;width:1000px;text-align:center;">10</div>
<div class="t" style="top:1000.6px;font-size:12.5px;line-height:20px;color:#667172;letter-spacing:1.000px;left:869.3px;width:1000px;text-align:center;">11</div>
<div class="t" style="top:1000.6px;font-size:12.5px;line-height:20px;color:#667172;letter-spacing:1.000px;left:910.0px;width:1000px;text-align:center;">12</div>
<div class="t" style="top:1000.6px;font-size:12.5px;line-height:20px;color:#667172;letter-spacing:1.000px;left:950.8px;width:1000px;text-align:center;">13</div>
<div class="t" style="top:1000.6px;font-size:12.5px;line-height:20px;color:#667172;letter-spacing:1.000px;left:991.5px;width:1000px;text-align:center;">14</div>
<div class="t" style="top:1000.6px;font-size:12.5px;line-height:20px;color:#667172;letter-spacing:1.000px;left:1032.3px;width:1000px;text-align:center;">15</div>
<div class="t" style="top:1000.6px;font-size:12.5px;line-height:20px;color:#667172;letter-spacing:1.000px;left:1073.1px;width:1000px;text-align:center;">16</div>
<div class="t" style="top:1000.6px;font-size:12.5px;line-height:20px;color:#667172;letter-spacing:1.000px;left:1113.8px;width:1000px;text-align:center;">17</div>
<div class="t" style="top:1000.6px;font-size:12.5px;line-height:20px;color:#667172;letter-spacing:1.000px;left:1154.6px;width:1000px;text-align:center;">18</div>
<div class="t" style="top:1000.6px;font-size:12.5px;line-height:20px;color:#667172;letter-spacing:1.000px;left:1195.3px;width:1000px;text-align:center;">19</div>
<div class="t" style="top:1000.6px;font-size:12.5px;line-height:20px;color:#667172;letter-spacing:1.000px;left:1236.1px;width:1000px;text-align:center;">20</div>
<div class="t" style="top:1000.6px;font-size:12.5px;line-height:20px;color:#667172;letter-spacing:1.000px;left:1276.8px;width:1000px;text-align:center;">21</div>
<div class="t" style="top:1000.6px;font-size:12.5px;line-height:20px;color:#667172;letter-spacing:1.000px;left:1317.6px;width:1000px;text-align:center;">22</div>
<div class="t" style="top:1000.6px;font-size:12.5px;line-height:20px;color:#667172;letter-spacing:1.000px;left:1358.4px;width:1000px;text-align:center;">23</div>
<div class="t" style="top:1000.6px;font-size:12.5px;line-height:20px;color:#667172;letter-spacing:1.000px;left:1399.1px;width:1000px;text-align:center;">24</div>
<div class="t" style="top:1000.6px;font-size:12.5px;line-height:20px;color:#667172;letter-spacing:1.000px;left:1439.9px;width:1000px;text-align:center;">25</div>
<div class="t" style="top:1000.6px;font-size:12.5px;line-height:20px;color:#667172;letter-spacing:1.000px;left:1480.6px;width:1000px;text-align:center;">26</div>
<div class="t" style="top:1000.6px;font-size:12.5px;line-height:20px;color:#667172;letter-spacing:1.000px;left:1521.4px;width:1000px;text-align:center;">27</div>
<div class="t" style="top:1000.6px;font-size:12.5px;line-height:20px;color:#667172;letter-spacing:1.000px;left:1562.1px;width:1000px;text-align:center;">28</div>
<div class="t" style="top:1000.6px;font-size:12.5px;line-height:20px;color:#667172;letter-spacing:1.000px;left:1602.9px;width:1000px;text-align:center;">29</div>
<div class="t" style="top:1000.6px;font-size:12.5px;line-height:20px;color:#667172;letter-spacing:1.000px;left:1643.7px;width:1000px;text-align:center;">30</div>
<div class="t" style="top:1000.6px;font-size:12.5px;line-height:20px;color:#667172;letter-spacing:1.000px;left:1684.4px;width:1000px;text-align:center;">31</div>
<div class="t" style="top:1015.8px;font-size:12px;line-height:20px;color:#5e696a;font-weight:700;letter-spacing:0.082px;left:462.2px;width:1000px;text-align:center;">DEC</div>
<div class="r" style="left:1226.2px;top:1060.2px;width:17.6px;height:17.6px;background:#08c4b2;border-radius:6.5px;"></div>
<div class="t" style="top:1059.3px;font-size:14px;line-height:20px;color:#6c7778;letter-spacing:0.162px;left:1249.7px;">Twitter</div>
<div class="r" style="left:1313.8px;top:1060.2px;width:17.6px;height:17.6px;background:#6f5ed3;border-radius:6.5px;"></div>
<div class="t" style="top:1059.3px;font-size:14px;line-height:20px;color:#6c7778;letter-spacing:-0.126px;left:1336.6px;">Facebook</div>
<div class="r" style="left:1419.2px;top:1060.2px;width:17.6px;height:17.6px;background:#cd3966;border-radius:6.5px;"></div>
<div class="t" style="top:1059.3px;font-size:14px;line-height:20px;color:#6c7778;letter-spacing:-0.006px;left:1442.4px;">Instagram</div>
<div class="r" style="left:1526.5px;top:1060.2px;width:17.6px;height:17.6px;background:#ffcd1c;border-radius:6.5px;"></div>
<div class="t" style="top:1059.3px;font-size:14px;line-height:20px;color:#6c7778;letter-spacing:-0.062px;left:1550.4px;">LinkedIn</div>
<div class="r" style="left:1625.2px;top:1060.2px;width:17.6px;height:17.6px;background:#3896e3;border-radius:6.5px;"></div>
<div class="t" style="top:1059.3px;font-size:14px;line-height:20px;color:#6c7778;letter-spacing:-0.186px;left:1648.8px;">TikTok</div>
<div class="r" style="left:1710.2px;top:1060.2px;width:17.6px;height:17.6px;background:#de5bd9;border-radius:6.5px;"></div>
<div class="t" style="top:1059.3px;font-size:14px;line-height:20px;color:#6c7778;letter-spacing:-0.056px;left:1733.8px;">Pinterest</div>
<div class="r" style="left:1811.2px;top:1060.2px;width:17.6px;height:17.6px;background:#59cb59;border-radius:6.5px;"></div>
<div class="t" style="top:1059.3px;font-size:14px;line-height:20px;color:#6c7778;letter-spacing:-0.170px;left:1834.2px;">YouTube</div>
<div class="r" style="left:814.5px;top:1108.5px;width:1485.5px;height:220px;border:1px solid #dee1e1;border-radius:9px;"></div>
<div class="t" style="top:1127.0px;font-size:12.5px;line-height:20px;color:#5e696a;letter-spacing:-0.232px;left:833.0px;">Audience Metrics</div>
<div class="t" style="top:1126.8px;font-size:12.5px;line-height:20px;color:#5e696a;letter-spacing:-0.451px;right:424.5px;">Totals</div>
<div class="t" style="top:1126.8px;font-size:12.5px;line-height:20px;color:#5e696a;letter-spacing:-0.668px;right:314.9px;">% Change</div>
<div class="r" style="left:833px;top:1156px;width:1448px;height:1px;background:#dee1e1;"></div>
<div class="r" style="left:833px;top:1201.8px;width:1448px;height:1.8px;background:#dde1e1;"></div>
<div class="r" style="left:833px;top:1250.2px;width:1448px;height:1px;background:#e8eaea;"></div>
<div class="t" style="top:1167.6px;font-size:18.5px;line-height:24px;color:#364141;letter-spacing:-0.150px;left:832.8px;-webkit-text-stroke:0.45px #364141;">Total Audience</div>
<div class="r" style="left:833px;top:1190.5px;width:118.5px;height:1px;border-bottom:1px dotted #929a9b;"></div>
<div class="t" style="top:1167.8px;font-size:18.3px;line-height:24px;color:#364141;letter-spacing:-0.592px;right:424.4px;-webkit-text-stroke:0.2px #364141;">351,869</div>
<svg class="r" style="left:2224.8px;top:1171.6px;" width="14.2" height="14.2" viewBox="0 0 14.4 14.4"><path d="M1.2 13.2 L12.4 2 M4.4 1.35 H13.05 V10" stroke="#0c8280" stroke-width="2.4" fill="none" stroke-linecap="butt" stroke-linejoin="miter"/></svg>
<div class="t" style="top:1167.4px;font-size:18.3px;line-height:24px;color:#0c8280;right:314.2px;transform:scaleX(0.9110);transform-origin:right center;-webkit-text-stroke:0.3px #0c8280;">0.7%</div>
<div class="t" style="top:1215.6px;font-size:18.5px;line-height:24px;color:#364141;letter-spacing:-0.118px;left:832.8px;-webkit-text-stroke:0.45px #364141;">Total Net Audience Growth</div>
<div class="r" style="left:833px;top:1237.8px;width:216px;height:1px;border-bottom:1px dotted #929a9b;"></div>
<div class="t" style="top:1215.8px;font-size:18.3px;line-height:24px;color:#364141;letter-spacing:-0.649px;right:424.4px;-webkit-text-stroke:0.2px #364141;">2,394</div>
<svg class="r" style="left:2214.8px;top:1219.4px;" width="14.2" height="14.2" viewBox="0 0 14.4 14.4"><path d="M1.2 13.2 L12.4 2 M4.4 1.35 H13.05 V10" stroke="#0c8280" stroke-width="2.4" fill="none" stroke-linecap="butt" stroke-linejoin="miter"/></svg>
<div class="t" style="top:1215.4px;font-size:18.3px;line-height:24px;color:#0c8280;right:314.2px;transform:scaleX(0.8942);transform-origin:right center;-webkit-text-stroke:0.3px #0c8280;">12.4%</div>
<div class="t" style="top:1262.0px;font-size:14px;line-height:20px;color:#6e797a;letter-spacing:0.173px;left:833.0px;">Twitter Net Follower Growth</div>
<div class="r" style="left:833px;top:1279.0px;width:177px;height:1px;border-bottom:1px dotted #929a9b;"></div>
<div class="t" style="top:1262.0px;font-size:14px;line-height:20px;color:#5e696a;letter-spacing:-0.018px;right:423.8px;">-66</div>
<svg class="r" style="left:2228.4px;top:1265.4px;" width="11" height="11" viewBox="0 0 14.4 14.4"><path d="M1.2 13.2 L12.4 2 M4.4 1.35 H13.05 V10" stroke="#0c8280" stroke-width="2.4" fill="none" stroke-linecap="butt" stroke-linejoin="miter"/></svg>
<div class="t" style="top:1261.8px;font-size:14px;line-height:20px;color:#3a9d9a;right:314.2px;transform:scaleX(0.9371);transform-origin:right center;">85.7%</div>
<div class="r" style="left:2506px;top:20px;width:69px;height:1263px;background:#fff;"></div>
<div class="r" style="left:2506px;top:20px;width:1px;height:1263px;background:#eceeee;"></div>
<div class="r" style="left:2513px;top:24px;width:55px;height:55px;background:#2079c3;border-radius:50%;"></div>
<svg class="r" style="left:2530px;top:40.5px;" width="22" height="22" viewBox="0 0 24 24"><path d="M10.4 5.2 H5.6 Q3.4 5.2 3.4 7.4 V18.2 Q3.4 20.4 5.6 20.4 H16.4 Q18.6 20.4 18.6 18.2 V13.4" stroke="#fff" stroke-width="2.2" fill="none" stroke-linecap="round"/><path d="M9 15 L9.8 11.4 L18.4 2.8 L21.2 5.6 L12.6 14.2 Z" fill="#fff"/></svg>
<svg class="r" style="left:2532.1px;top:102.6px;overflow:visible;" width="18" height="18" viewBox="0 0 18 18"><path d="M9 0.8 Q10 0.8 10.5 1.7 L17.6 14.6 Q18.3 16.4 16.4 16.6 H1.6 Q-0.3 16.4 0.4 14.6 L7.5 1.7 Q8 0.8 9 0.8 Z" fill="#364141"/><rect x="8" y="5.6" width="2" height="5.8" rx="0.8" fill="#fff"/><circle cx="9" cy="13.6" r="1.2" fill="#fff"/></svg>
<svg class="r" style="left:2532.1px;top:160.6px;overflow:visible;" width="18" height="18" viewBox="0 0 18 18"><path d="M2.4 6.4 Q2.4 1.5 7.3 1.3 L17.7 0.5 L17.3 9.4 Q17.1 14.5 12 14.5 H6.6 L2.6 18 Q2.2 18.2 2.2 17.6 Z" fill="#364141"/><path d="M11.2 3.6 L6.8 8.4 H9.5 L8.4 12 L13 7 H10.2 Z" fill="#fff"/></svg>
<svg class="r" style="left:2532.1px;top:219.8px;overflow:visible;" width="18" height="18" viewBox="0 0 18 18"><g stroke="#364141" stroke-width="2.8" fill="none" stroke-linecap="round"><path d="M7.6 10.4 Q5.6 8.4 7.6 6.4 L11 3 Q13 1 15 3 Q17 5 15 7 L13.6 8.4"/><path d="M10.4 7.6 Q12.4 9.6 10.4 11.6 L7 15 Q5 17 3 15 Q1 13 3 11 L4.4 9.6"/></g></svg>
<svg class="r" style="left:2532.1px;top:279.6px;overflow:visible;" width="18" height="18" viewBox="0 0 18 18"><rect x="0.6" y="0.6" width="16.8" height="16.8" rx="2.6" fill="#364141"/><path d="M9 4.4 V13.6 M4.4 9 H13.6" stroke="#fff" stroke-width="2.8"/></svg>
<svg class="r" style="left:2532.1px;top:338.8px;overflow:visible;" width="18" height="18" viewBox="0 0 18 18"><circle cx="9.6" cy="4.9" r="3.2" fill="#364141"/><path d="M4.2 14.8 Q4.2 9.4 9.6 9.4 Q11.8 9.4 13 10.3 V12.6 H14.6 V14.8 Z" fill="#364141"/><circle cx="3.5" cy="5.9" r="1.9" fill="#364141"/><path d="M0.3 12.2 Q0.3 8.8 3.5 8.8 L4.6 9 Q2.8 10.4 2.8 12.2 Z" fill="#364141"/><path d="M15.6 7 V12.4 M12.9 9.7 H18.3" stroke="#364141" stroke-width="1.8"/></svg>
<svg class="r" style="left:2532.1px;top:397.4px;overflow:visible;" width="18" height="18" viewBox="0 0 18 18"><circle cx="7.2" cy="7.2" r="5.3" stroke="#364141" stroke-width="2.6" fill="none"/><path d="M11.4 11.4 L16.4 16.4" stroke="#364141" stroke-width="3" stroke-linecap="round"/></svg>
<svg class="r" style="left:2532.1px;top:457.2px;overflow:visible;" width="18" height="18" viewBox="0 0 18 18"><rect x="0.4" y="2.8" width="17.2" height="12.4" rx="1.8" fill="#364141"/><g fill="#fff"><rect x="2.4" y="5" width="1.7" height="1.6"/><rect x="5.2" y="5" width="1.7" height="1.6"/><rect x="8" y="5" width="1.7" height="1.6"/><rect x="10.8" y="5" width="1.7" height="1.6"/><rect x="13.6" y="5" width="1.7" height="1.6"/><rect x="2.4" y="8" width="1.7" height="1.6"/><rect x="5.2" y="8" width="1.7" height="1.6"/><rect x="8" y="8" width="1.7" height="1.6"/><rect x="10.8" y="8" width="1.7" height="1.6"/><rect x="13.6" y="8" width="1.7" height="1.6"/><rect x="4.4" y="11.2" width="9.2" height="1.6"/></g></svg>
<svg class="r" style="left:2532.1px;top:516.4px;overflow:visible;" width="18" height="18" viewBox="0 0 18 18"><circle cx="9" cy="9" r="8.6" fill="#364141"/><path d="M6.2 7 Q6.2 4.2 9 4.2 Q11.9 4.2 11.9 6.8 Q11.9 8.4 10.2 9.2 Q9.2 9.7 9.2 11" stroke="#fff" stroke-width="2.1" fill="none"/><circle cx="9.2" cy="13.6" r="1.3" fill="#fff"/></svg>
<div class="r" style="left:2550px;top:100px;width:9px;height:9px;background:#db3e3e;border-radius:50%;"></div>
</div></div></body></html>
